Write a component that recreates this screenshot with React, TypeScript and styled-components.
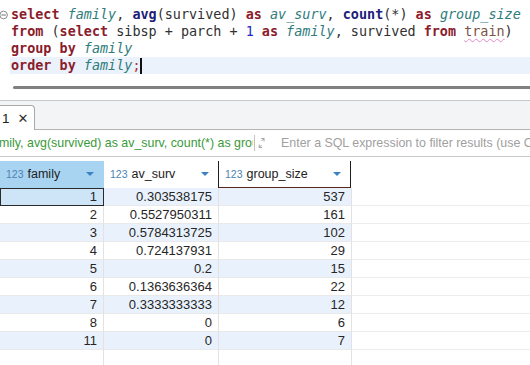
import styled, { createGlobalStyle } from 'styled-components';

const GlobalStyle = createGlobalStyle`
  html, body {
    margin: 0;
    padding: 0;
    background: #fff;
  }
  body {
    width: 530px;
    height: 365px;
    overflow: hidden;
  }
`;

type Kind = 'k' | 'f' | 'a' | 'c' | 'n' | 't' | 'p' | 's';
type Tok = [Kind, string];

const sql: Tok[][] = [
  [
    ['k', 'select'], ['p', ' '], ['a', 'family'], ['p', ', '], ['f', 'avg'], ['p', '('],
    ['c', 'survived'], ['p', ') '], ['k', 'as'], ['p', ' '], ['a', 'av_surv'], ['p', ', '],
    ['f', 'count'], ['p', '(*) '], ['k', 'as'], ['p', ' '], ['a', 'group_size'],
  ],
  [
    ['k', 'from'], ['p', ' ('], ['k', 'select'], ['c', ' sibsp + parch + '], ['n', '1'],
    ['p', ' '], ['k', 'as'], ['p', ' '], ['a', 'family'], ['p', ', '], ['c', 'survived'],
    ['p', ' '], ['k', 'from'], ['p', ' '], ['t', 'train'], ['p', ')'],
  ],
  [['k', 'group by'], ['p', ' '], ['a', 'family']],
  [['k', 'order by'], ['p', ' '], ['a', 'family'], ['s', ';']],
];

const columns = [
  { name: 'family', width: 104 },
  { name: 'av_surv', width: 115 },
  { name: 'group_size', width: 133 },
];

const rows: string[][] = [
  ['1', '0.303538175', '537'],
  ['2', '0.5527950311', '161'],
  ['3', '0.5784313725', '102'],
  ['4', '0.724137931', '29'],
  ['5', '0.2', '15'],
  ['6', '0.1363636364', '22'],
  ['7', '0.3333333333', '12'],
  ['8', '0', '6'],
  ['11', '0', '7'],
];

const FoldIcon = () => (
  <svg width="10" height="10" viewBox="0 0 10 10">
    <circle cx="3.6" cy="5" r="3.8" fill="#fff" stroke="#8a8a8a" strokeWidth="1" />
    <line x1="1.5" y1="5" x2="5.8" y2="5" stroke="#6a6a6a" strokeWidth="1" />
  </svg>
);

const ExpandIcon = () => (
  <svg width="9" height="14" viewBox="0 0 9 14">
    <path d="M4 1.5 H7.5 V5 M7.5 1.5 L4.5 4.5" fill="none" stroke="#8c8c8c" strokeWidth="1" />
    <path d="M1.5 9 V12.5 H5 M1.5 12.5 L4.5 9.5" fill="none" stroke="#8c8c8c" strokeWidth="1" />
  </svg>
);

const App = () => {
  return (
    <Page>
      <GlobalStyle />
      <Editor>
        {sql.map((line, i) => (
          <CodeLine key={i}>
            <Gutter>{i === 0 && <FoldIcon />}</Gutter>
            <Code $current={i === sql.length - 1}>
              {line.map(([kind, text], j) => (
                <Token key={j} $kind={kind}>
                  {text}
                </Token>
              ))}
              {i === sql.length - 1 && <Caret />}
            </Code>
          </CodeLine>
        ))}
        <ScrollThumb />
      </Editor>

      <Results>
        <TabBar>
          <Tab>
            <TabTitle>1</TabTitle>
            <TabClose>✕</TabClose>
          </Tab>
        </TabBar>

        <FilterBar>
          <QueryText>
            <span>mily, avg(survived) as av_surv, count(*) as group_size</span>
          </QueryText>
          <FilterDivider />
          <ExpandIcon />
          <Placeholder>Enter a SQL expression to filter results (use Ctrl+Space)</Placeholder>
        </FilterBar>

        <Grid>
          <HeaderRow>
            {columns.map((col, i) => (
              <HeaderCell key={col.name} $w={col.width} $selected={i === 0} $focused={i === 2}>
                <HeaderLabel>
                  <TypeBadge>123</TypeBadge>
                  {col.name}
                </HeaderLabel>
                <SortArrow />
              </HeaderCell>
            ))}
          </HeaderRow>

          {rows.map((row, r) => (
            <Row key={r}>
              {row.map((value, c) => (
                <Cell
                  key={c}
                  $w={columns[c].width}
                  $odd={r % 2 === 0}
                  $active={r === 0 && c === 0}
                >
                  {value}
                </Cell>
              ))}
              <RestCell />
            </Row>
          ))}

          <FillerRow>
            {columns.map((col) => (
              <FillerCell key={col.name} $w={col.width} />
            ))}
          </FillerRow>
        </Grid>
      </Results>
    </Page>
  );
};

const Page = styled.div`
  width: 530px;
  height: 365px;
  display: flex;
  flex-direction: column;
  overflow: hidden;
  background: #fff;
`;

const Editor = styled.div`
  height: 100px;
  flex: none;
  padding-top: 6px;
  box-sizing: border-box;
  display: flex;
  flex-direction: column;
`;

const CodeLine = styled.div`
  display: flex;
  height: 17px;
`;

const Gutter = styled.div`
  width: 10px;
  flex: none;
  display: flex;
  align-items: center;
  overflow: hidden;
`;

const Code = styled.div<{ $current?: boolean }>`
  flex: 1;
  display: flex;
  align-items: center;
  padding-left: 1px;
  white-space: pre;
  font-family: 'DejaVu Sans Mono', monospace;
  font-size: 13.45px;
  line-height: 17px;
  background: ${(p) => (p.$current ? '#ebf2fb' : 'transparent')};
`;

const tokenStyles: Record<Kind, string> = {
  k: 'color: #8a1c2c; font-weight: bold;',
  f: 'color: #202078; font-weight: bold;',
  a: 'color: #2f7c7c; font-style: italic;',
  c: 'color: #303030;',
  n: 'color: #2424c8;',
  t: `color: #7a5446;
      text-decoration: underline wavy #e58ac8;
      text-decoration-thickness: 1px;
      text-underline-offset: 2px;`,
  p: 'color: #303030;',
  s: 'color: #b0352c;',
};

const Token = styled.span<{ $kind: Kind }>`
  ${(p) => tokenStyles[p.$kind]}
`;

const Caret = styled.span`
  display: inline-block;
  width: 1.5px;
  height: 16px;
  background: #111;
`;

const ScrollThumb = styled.div`
  margin: 12px 0 0 13px;
  height: 3px;
  border-radius: 1.5px 0 0 1.5px;
  background: #808080;
`;

const Results = styled.div`
  flex: 1;
  display: flex;
  flex-direction: column;
  border-top: 1px solid #c9c9c9;
  min-height: 0;
`;

const TabBar = styled.div`
  height: 29px;
  flex: none;
  box-sizing: border-box;
  padding-top: 4px;
  display: flex;
  align-items: flex-end;
  background: #f3f4f5;
  border-bottom: 1px solid #b4b4b4;
`;

const Tab = styled.div`
  height: 25px;
  width: 35px;
  margin-bottom: -1px;
  box-sizing: border-box;
  display: flex;
  align-items: center;
  gap: 8px;
  padding-left: 2px;
  background: #fff;
  border-top: 1px solid #aaa;
  border-right: 1px solid #aaa;
  border-radius: 0 4px 0 0;
  font-family: 'Liberation Sans', Arial, sans-serif;
`;

const TabTitle = styled.span`
  font-size: 13.5px;
  color: #222;
`;

const TabClose = styled.span`
  font-family: 'DejaVu Sans', sans-serif;
  font-size: 13px;
  color: #333;
`;

const FilterBar = styled.div`
  height: 27px;
  flex: none;
  box-sizing: border-box;
  display: flex;
  align-items: center;
  border-bottom: 1px solid #c8c8c8;
  font-family: 'Liberation Sans', Arial, sans-serif;
  font-size: 12.4px;
`;

const QueryText = styled.div`
  width: 253px;
  flex: none;
  overflow: hidden;
  white-space: nowrap;
  color: #3a9a3a;
  span {
    margin-left: -1px;
  }
`;

const FilterDivider = styled.div`
  width: 1px;
  height: 16px;
  margin: 0 3px 0 1px;
  background: #c4c4c4;
`;

const Placeholder = styled.div`
  margin-left: 16px;
  white-space: nowrap;
  overflow: hidden;
  color: #a0a0a0;
`;

const Grid = styled.div`
  flex: 1;
  display: flex;
  flex-direction: column;
  min-height: 0;
  font-family: 'Liberation Sans', Arial, sans-serif;
`;

const HeaderRow = styled.div`
  height: 31px;
  flex: none;
  box-sizing: border-box;
  padding-top: 4px;
  display: flex;
`;

const HeaderCell = styled.div<{ $w: number; $selected?: boolean; $focused?: boolean }>`
  width: ${(p) => p.$w}px;
  flex: none;
  box-sizing: border-box;
  display: flex;
  align-items: center;
  justify-content: space-between;
  padding: 0 9px 0 6px;
  background: ${(p) => (p.$selected ? '#a9d4f1' : '#fff')};
  border-right: 1px solid ${(p) => (p.$focused ? '#1e1e1e' : p.$selected ? '#a9d4f1' : '#fff')};
  border-left: ${(p) => (p.$focused ? '1px solid #1e1e1e' : 'none')};
  border-bottom: 1px solid ${(p) => (p.$focused ? '#5a261c' : 'transparent')};
  margin-left: ${(p) => (p.$focused ? '-1px' : '0')};
`;

const HeaderLabel = styled.span`
  font-size: 12.5px;
  color: #222;
  white-space: nowrap;
`;

const TypeBadge = styled.span`
  font-size: 10.5px;
  color: #4d83b3;
  margin-right: 4px;
`;

const SortArrow = styled.span`
  width: 0;
  height: 0;
  border-left: 4px solid transparent;
  border-right: 4px solid transparent;
  border-top: 4px solid #3b82c4;
`;

const Row = styled.div`
  height: 18px;
  flex: none;
  display: flex;
`;

const Cell = styled.div<{ $w: number; $odd?: boolean; $active?: boolean }>`
  width: ${(p) => p.$w}px;
  flex: none;
  box-sizing: border-box;
  padding-right: 6px;
  text-align: right;
  font-size: 13px;
  line-height: 17px;
  color: #262626;
  background: ${(p) => (p.$active ? '#cde5f7' : p.$odd ? '#e9f2fc' : '#fff')};
  border-right: 1px solid #e2e2e2;
  border-bottom: 1px solid #e9e9e9;
  ${(p) => p.$active && 'outline: 1px solid #2a2a2a; outline-offset: -1px; border-left: 1px solid #2a2a2a;'}
`;

const RestCell = styled.div`
  flex: 1;
  border-bottom: 1px solid #ececec;
`;

const FillerRow = styled.div`
  flex: 1;
  display: flex;
`;

const FillerCell = styled.div<{ $w: number }>`
  width: ${(p) => p.$w}px;
  flex: none;
  box-sizing: border-box;
  border-right: 1px solid #e2e2e2;
`;

export default App;
